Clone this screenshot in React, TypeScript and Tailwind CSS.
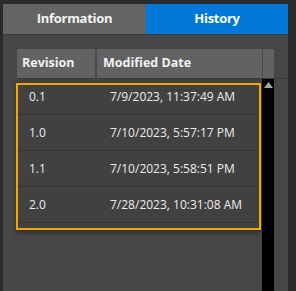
const rows = [
  { rev: "0.1", date: "7/9/2023, 11:37:49 AM" },
  { rev: "1.0", date: "7/10/2023, 5:57:17 PM" },
  { rev: "1.1", date: "7/10/2023, 5:58:51 PM" },
  { rev: "2.0", date: "7/28/2023, 10:31:08 AM" },
]

const font = { fontFamily: '"Open Sans", "Noto Sans", sans-serif' }

export default function App() {
  return (
    <div
      className="h-[291px] w-[296px] overflow-hidden bg-[#2b2b2b] pt-[4px] pr-[8px] pl-[3px] text-[#f2f2f2]"
      style={font}
    >
      <div className="flex h-full flex-col bg-[#474747]">
        {/* tabs */}
        <div className="flex h-[31px] flex-none border-b border-[#3a3a3a]">
          <div className="flex w-[143px] items-center justify-center bg-[#646464] text-[13px] font-bold tracking-[-0.3px]">
            Information
          </div>
          <div className="flex flex-1 items-center justify-center bg-[#0078d7] text-[13px] font-bold tracking-[-0.3px] text-white">
            History
          </div>
        </div>

        {/* grid */}
        <div className="relative flex min-h-0 flex-1 flex-col pt-[14px] pl-[14px]">
          <div className="flex h-[30px] flex-none border-b border-[#3a3a3a] text-[12.5px] font-bold">
            <div className="flex w-[80px] items-center border-r-2 border-[#4a4a4a] bg-[#626262] pl-[5px]">
              Revision
            </div>
            <div className="flex w-[165px] items-center bg-[#626262] pl-[6px]">
              Modified Date
            </div>
            <div className="w-[12px] border-l border-[#4a4a4a] bg-[#626262]" />
          </div>

          <div className="flex min-h-0 flex-1">
            <div className="h-[150px] w-[245px] bg-[#414141] text-[12px] text-[#ececec]">
              {rows.map((r) => (
                <div key={r.rev} className="flex h-[36px] items-center border-b border-[#353535]">
                  <span className="w-[80px] pl-[12px]">{r.rev}</span>
                  <span className="pl-[13px]">{r.date}</span>
                </div>
              ))}
            </div>
            <div className="flex w-[12px] justify-center bg-black pt-[3px]">
              <svg width="9" height="6" viewBox="0 0 9 6">
                <polygon points="4.5,0 9,6 0,6" fill="#a6a6a6" />
              </svg>
            </div>
          </div>

          {/* focus outline */}
          <div className="pointer-events-none absolute top-[48px] left-[13px] h-[147px] w-[245px] border-2 border-[#f5a800] shadow-[0_3px_5px_rgba(0,0,0,0.35)]" />
        </div>
      </div>
    </div>
  )
}
